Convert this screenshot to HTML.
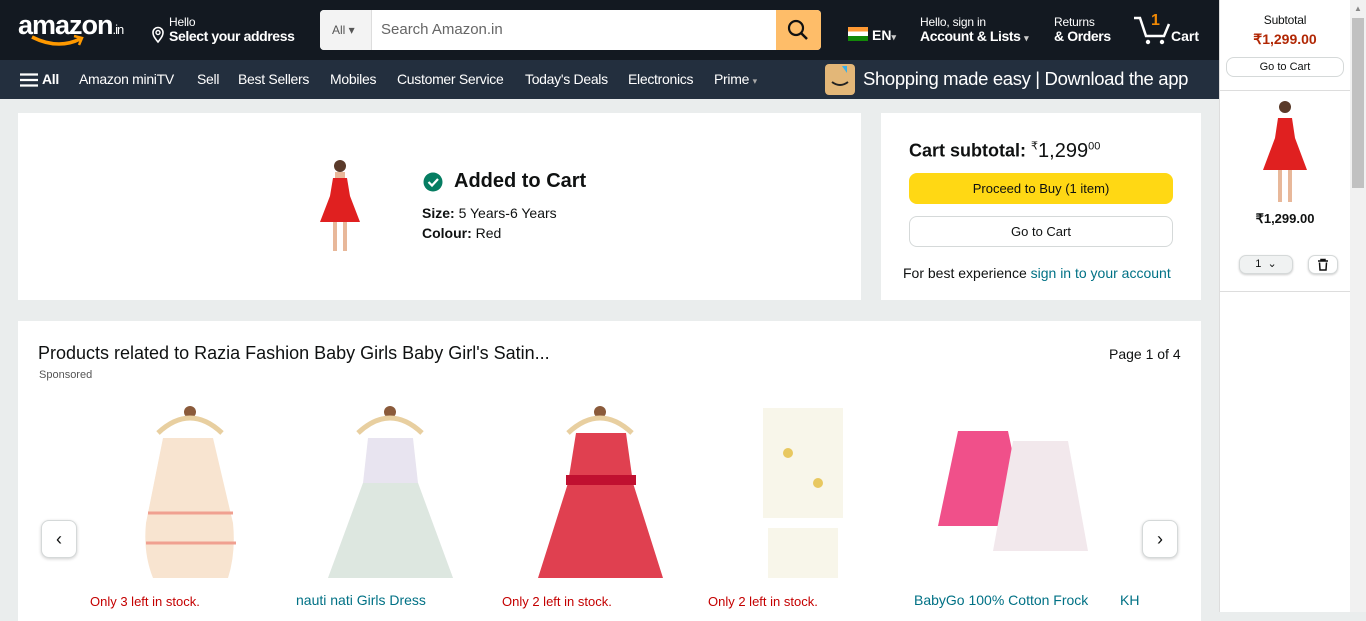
<!DOCTYPE html>
<html><head><meta charset="utf-8"><style>
*{box-sizing:border-box;margin:0;padding:0}
body{width:1366px;height:612px;overflow:hidden;background:#eaeded;font-family:"Liberation Sans",sans-serif;position:relative;color:#0f1111}
.a{position:absolute}
.hdr{left:0;top:0;width:1219px;height:60px;background:#131921;color:#fff}
.nav{left:0;top:60px;width:1219px;height:39px;background:#232f3e;color:#fff;font-size:14px;font-weight:bold;letter-spacing:-0.3px}
.nav span{position:absolute;top:11px}
.card{background:#fff}
.side{left:1219px;top:0;width:131px;height:612px;background:#fff;border-left:1px solid #ddd}
.sb{left:1350px;top:0;width:16px;height:612px;background:#f1f1f1}
.btn{border:1px solid #d5d9d9;border-radius:8px;background:#fff;text-align:center}
.small{font-size:12px;letter-spacing:-0.2px}
</style></head><body>
<div class="a hdr">
 <div class="a" style="left:18px;top:10px;font-size:27px;font-weight:bold;letter-spacing:-1px">amazon<span style="font-size:13px;font-weight:normal">.in</span></div>
 <svg class="a" style="left:30px;top:34px" width="56" height="14"><path d="M2 3 Q28 16 50 5" stroke="#f90" stroke-width="3.5" fill="none"/><path d="M44 2 L52 4 L49 11" stroke="#f90" stroke-width="2.5" fill="none"/></svg>
 <svg class="a" style="left:151px;top:26px" width="14" height="18"><path d="M7 16 C2 10 2 8 2 6.5 A5 5 0 0 1 12 6.5 C12 8 12 10 7 16Z" stroke="#fff" stroke-width="1.6" fill="none"/><circle cx="7" cy="6.5" r="2" stroke="#fff" stroke-width="1.4" fill="none"/></svg>
 <div class="a small" style="left:169px;top:15px">Hello</div>
 <div class="a" style="left:169px;top:28px;font-size:14px;font-weight:bold;letter-spacing:-0.4px">Select your address</div>
 <div class="a" style="left:320px;top:10px;width:501px;height:40px;background:#fff;border-radius:4px;overflow:hidden">
  <div class="a" style="left:0;top:0;width:52px;height:40px;background:#f3f3f3;border-right:1px solid #ddd;font-size:12px;color:#555;padding:13px 0 0 12px">All ▾</div>
  <div class="a" style="left:61px;top:11px;font-size:15px;color:#666">Search Amazon.in</div>
  <div class="a" style="left:456px;top:0;width:45px;height:40px;background:#febd69"><svg width="45" height="40"><circle cx="20" cy="18" r="7" stroke="#111" stroke-width="2.2" fill="none"/><path d="M25 23 L31 29" stroke="#111" stroke-width="2.5"/></svg></div>
 </div>
 <div class="a" style="left:848px;top:27px;width:20px;height:14px;background:linear-gradient(#f93 33%,#fff 33%,#fff 66%,#138808 66%)"></div>
 <div class="a" style="left:872px;top:27px;font-size:14px;font-weight:bold">EN<span style="font-size:9px;color:#ccc">▾</span></div>
 <div class="a small" style="left:920px;top:15px">Hello, sign in</div>
 <div class="a" style="left:920px;top:28px;font-size:14px;font-weight:bold;letter-spacing:-0.4px">Account &amp; Lists <span style="font-size:9px;color:#ccc">▾</span></div>
 <div class="a small" style="left:1054px;top:15px">Returns</div>
 <div class="a" style="left:1054px;top:28px;font-size:14px;font-weight:bold;letter-spacing:-0.4px">&amp; Orders</div>
 <svg class="a" style="left:1132px;top:14px" width="40" height="32"><path d="M2 4 L8 4 L14 22 L32 22 L37 10" stroke="#fff" stroke-width="2.5" fill="none"/><circle cx="16" cy="28" r="2.2" fill="#fff"/><circle cx="30" cy="28" r="2.2" fill="#fff"/></svg>
 <div class="a" style="left:1151px;top:12px;font-size:16px;font-weight:bold;color:#f08804">1</div>
 <div class="a" style="left:1171px;top:28px;font-size:14px;font-weight:bold">Cart</div>
 <div class="a" style="left:1213px;top:31px;width:0;height:0;border:6px solid transparent;border-right-color:#fff"></div>
</div>
<div class="a nav">
 <svg class="a" style="left:20px;top:13px" width="18" height="14"><path d="M0 1.5H18M0 7H18M0 12.5H18" stroke="#fff" stroke-width="2.2"/></svg>
 <span style="left:42px">All</span><span style="left:79px;font-weight:normal">Amazon miniTV</span><span style="left:197px;font-weight:normal">Sell</span><span style="left:238px;font-weight:normal">Best Sellers</span><span style="left:330px;font-weight:normal">Mobiles</span><span style="left:397px;font-weight:normal">Customer Service</span><span style="left:525px;font-weight:normal">Today's Deals</span><span style="left:628px;font-weight:normal">Electronics</span><span style="left:714px;font-weight:normal">Prime <span style="position:static;font-size:9px;color:#aaa">▾</span></span>
 <div class="a" style="left:825px;top:4px;width:30px;height:31px;background:#e3b778;border-radius:4px"><svg width="30" height="31"><path d="M7 18 Q15 24 23 18" stroke="#222" stroke-width="2" fill="none"/><path d="M17 2 L22 2 L22 9 Z" fill="#3ab0e8"/></svg></div>
 <span style="left:863px;top:8px;font-size:18.5px;font-weight:normal;letter-spacing:-0.35px">Shopping made easy | Download the app</span>
</div>

<div class="a card" style="left:18px;top:113px;width:843px;height:187px">
 <svg class="a" style="left:300px;top:43px" width="44" height="100"><circle cx="22" cy="10" r="6" fill="#5a3a2a"/><rect x="17" y="16" width="10" height="6" fill="#e8b89a"/><path d="M15 22 L29 22 L32 40 L42 66 L2 66 L12 40Z" fill="#e02020"/><path d="M17 66 L17 95 M27 66 L27 95" stroke="#e8b89a" stroke-width="4"/></svg>
 <svg class="a" style="left:405px;top:59px" width="20" height="20"><circle cx="10" cy="10" r="9.5" fill="#067d62"/><path d="M5.5 10 L9 13.5 L15 7" stroke="#fff" stroke-width="2.2" fill="none"/></svg>
 <div class="a" style="left:436px;top:57px;font-size:20px;font-weight:bold">Added to Cart</div>
 <div class="a" style="left:404px;top:92px;font-size:14px"><b>Size:</b> 5 Years-6 Years</div>
 <div class="a" style="left:404px;top:112px;font-size:14px"><b>Colour:</b> Red</div>
</div>
<div class="a card" style="left:881px;top:113px;width:320px;height:187px">
 <div class="a" style="left:28px;top:26px;font-size:18px;font-weight:bold">Cart subtotal: <span style="font-weight:normal;font-size:20px"><sup style="font-size:11px">₹</sup>1,299<sup style="font-size:11px">00</sup></span></div>
 <div class="a" style="left:28px;top:60px;width:264px;height:31px;background:#ffd814;border-radius:8px;font-size:13px;text-align:center;line-height:31px">Proceed to Buy (1 item)</div>
 <div class="a btn" style="left:28px;top:103px;width:264px;height:31px;font-size:13px;line-height:29px">Go to Cart</div>
 <div class="a" style="left:22px;top:152px;font-size:14px">For best experience <span style="color:#007185">sign in to your account</span></div>
</div>

<div class="a card" style="left:18px;top:321px;width:1183px;height:300px">
 <div class="a" style="left:20px;top:22px;font-size:18px">Products related to Razia Fashion Baby Girls Baby Girl's Satin...</div>
 <div class="a" style="left:21px;top:48px;font-size:11px;color:#555">Sponsored</div>
 <div class="a" style="left:1091px;top:25px;font-size:14px">Page 1 of 4</div>
 <div class="a btn" style="left:23px;top:199px;width:36px;height:38px;box-shadow:0 1px 3px rgba(0,0,0,.2);font-size:18px;line-height:36px">‹</div>
 <div class="a btn" style="left:1124px;top:199px;width:36px;height:38px;box-shadow:0 1px 3px rgba(0,0,0,.2);font-size:18px;line-height:36px">›</div>
 <svg class="a" style="left:100px;top:82px" width="140" height="180"><circle cx="72" cy="9" r="6" fill="#8a5a3a"/><path d="M40 30 Q72 0 104 30" stroke="#e8cfa0" stroke-width="5" fill="none"/><path d="M45 35 L95 35 L115 120 Q118 150 110 175 L35 175 Q25 150 28 120Z" fill="#f8e4d0"/><path d="M30 110 H115 M28 140 H118" stroke="#f0a090" stroke-width="3"/></svg>
 <svg class="a" style="left:300px;top:82px" width="145" height="180"><circle cx="72" cy="9" r="6" fill="#8a5a3a"/><path d="M40 30 Q72 0 104 30" stroke="#e8cfa0" stroke-width="5" fill="none"/><path d="M50 35 L95 35 L100 80 L135 175 L10 175 L45 80Z" fill="#e8e4f0"/><path d="M45 80 L100 80 L135 175 L10 175Z" fill="#d8e8d8" opacity=".7"/></svg>
 <svg class="a" style="left:510px;top:82px" width="145" height="180"><circle cx="72" cy="9" r="6" fill="#8a5a3a"/><path d="M40 30 Q72 0 104 30" stroke="#e8cfa0" stroke-width="5" fill="none"/><path d="M48 30 L98 30 L105 80 L135 175 L10 175 L40 80Z" fill="#e04050"/><rect x="38" y="72" width="70" height="10" fill="#c01030"/></svg>
 <svg class="a" style="left:730px;top:82px" width="110" height="180"><rect x="15" y="5" width="80" height="110" fill="#f8f6ea"/><rect x="20" y="125" width="70" height="50" fill="#f8f6ea"/><circle cx="40" cy="50" r="5" fill="#e8c860"/><circle cx="70" cy="80" r="5" fill="#e8c860"/></svg>
 <svg class="a" style="left:920px;top:105px" width="160" height="130"><path d="M20 5 L70 5 L90 100 L0 100Z" fill="#f0508a"/><path d="M75 15 L130 15 L150 125 L55 125Z" fill="#f2e8ec"/></svg>
 <div class="a" style="left:72px;top:273px;font-size:13px;color:#c40000">Only 3 left in stock.</div>
 <div class="a" style="left:278px;top:271px;font-size:14px;color:#007185">nauti nati Girls Dress</div>
 <div class="a" style="left:484px;top:273px;font-size:13px;color:#c40000">Only 2 left in stock.</div>
 <div class="a" style="left:690px;top:273px;font-size:13px;color:#c40000">Only 2 left in stock.</div>
 <div class="a" style="left:896px;top:271px;font-size:14px;color:#007185">BabyGo 100% Cotton Frock</div>
 <div class="a" style="left:1102px;top:271px;font-size:14px;color:#007185">KH</div>
</div>

<div class="a side">
 <div class="a small" style="left:0;width:130px;top:13px;text-align:center;font-size:12px">Subtotal</div>
 <div class="a" style="left:0;width:130px;top:31px;text-align:center;font-size:14px;font-weight:bold;color:#b12704">₹1,299.00</div>
 <div class="a btn" style="left:6px;top:57px;width:118px;height:20px;font-size:11px;line-height:18px">Go to Cart</div>
 <div class="a" style="left:0;top:90px;width:130px;border-top:1px solid #ddd"></div>
 <svg class="a" style="left:40px;top:98px" width="50" height="110"><circle cx="25" cy="9" r="6" fill="#5a3a2a"/><path d="M18 20 L32 20 L35 40 L47 72 L3 72 L15 40Z" fill="#e02020"/><path d="M20 72 L20 104 M30 72 L30 104" stroke="#e8b89a" stroke-width="4"/></svg>
 <div class="a" style="left:0;width:130px;top:211px;text-align:center;font-size:13px;font-weight:bold">₹1,299.00</div>
 <div class="a btn" style="left:19px;top:255px;width:54px;height:19px;font-size:11px;line-height:17px;background:#f0f2f2;border-radius:7px;box-shadow:0 1px 2px rgba(0,0,0,.2)">1 &nbsp;⌄</div>
 <div class="a btn" style="left:88px;top:255px;width:30px;height:19px;border-radius:7px;box-shadow:0 1px 2px rgba(0,0,0,.2)"><svg width="28" height="17"><path d="M9 5H19M12 5V3.5H16V5M10.5 6.5L11 14H17L17.5 6.5" stroke="#111" stroke-width="1.5" fill="none"/></svg></div>
 <div class="a" style="left:0;top:291px;width:130px;border-top:1px solid #ddd"></div>
</div>
<div class="a sb"><div class="a" style="left:2px;top:18px;width:12px;height:170px;background:#c1c1c1"></div><div class="a" style="left:4px;top:4px;font-size:8px;color:#888">▲</div></div>
</body></html>
